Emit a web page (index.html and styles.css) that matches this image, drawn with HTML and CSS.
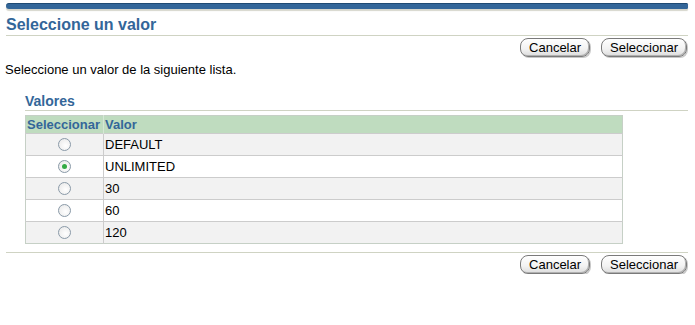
FILE: index.html
```html
<!DOCTYPE html>
<html>
<head>
<meta charset="utf-8">
<link rel="stylesheet" href="styles.css">
</head>
<body>
<div class="page">
  <div class="topbar"></div>
  <h1 class="title">Seleccione un valor</h1>
  <div class="btnrow top">
    <button class="btn">Cancelar</button>
    <button class="btn">Seleccionar</button>
  </div>
  <p class="instr">Seleccione un valor de la siguiente lista.</p>
  <div class="section">
    <h2 class="subtitle">Valores</h2>
    <table class="grid">
      <thead>
        <tr><th class="c1">Seleccionar</th><th class="c2">Valor</th></tr>
      </thead>
      <tbody>
        <tr class="odd"><td class="c1"><span class="radio"></span></td><td class="c2">DEFAULT</td></tr>
        <tr class="even"><td class="c1"><span class="radio on"></span></td><td class="c2">UNLIMITED</td></tr>
        <tr class="odd"><td class="c1"><span class="radio"></span></td><td class="c2">30</td></tr>
        <tr class="even"><td class="c1"><span class="radio"></span></td><td class="c2">60</td></tr>
        <tr class="odd"><td class="c1"><span class="radio"></span></td><td class="c2">120</td></tr>
      </tbody>
    </table>
  </div>
  <div class="btnrow bottom">
    <button class="btn">Cancelar</button>
    <button class="btn">Seleccionar</button>
  </div>
</div>
</body>
</html>
```
FILE: styles.css
```css
html, body {
  margin: 0;
  padding: 0;
  background: #ffffff;
}
body {
  font-family: "Liberation Sans", Arial, sans-serif;
  font-size: 13px;
  color: #000000;
}
.page {
  padding: 3px 7px 0 5px;
}
.topbar {
  margin-left: 1px;
  height: 6px;
  background: #336699;
  border-top: 1px solid #1f4a73;
  border-radius: 4px 2px 2px 4px;
  box-shadow: 0 2px 1px #d6d6cc;
  box-sizing: border-box;
}
.title {
  margin: 6px 0 0 1px;
  font-size: 16px;
  font-weight: bold;
  line-height: 19px;
  height: 19px;
  color: #336699;
  border-bottom: 1px solid #cfd3c3;
  padding-bottom: 1px;
}
.btnrow {
  display: flex;
  justify-content: flex-end;
  gap: 11px;
  padding-right: 1px;
}
.btnrow.top {
  margin-top: 2px;
}
.btn {
  font-family: "Liberation Sans", Arial, sans-serif;
  font-size: 13px;
  height: 19px;
  line-height: 15px;
  padding: 0 8px;
  margin: 0;
  color: #000;
  background: linear-gradient(#ffffff, #f2f2f2 60%, #dcdcdc);
  border: 1px solid #7a7a7a;
  border-radius: 8px;
  box-shadow: inset -1px -1px 0 #b0b0b0, 1px 1px 0 #c8c8c8;
}
.instr {
  margin: 5px 0 0 0;
  line-height: 15px;
}
.section {
  margin-left: 20px;
  margin-top: 16px;
}
.subtitle {
  margin: 0;
  font-size: 14px;
  font-weight: bold;
  line-height: 16px;
  color: #336699;
  border-bottom: 1px solid #cfd3c3;
  padding-bottom: 1px;
}
.grid {
  margin-top: 4px;
  width: 598px;
  border-collapse: collapse;
  border: 1px solid #c6d0c6;
}
.grid th {
  background: #bfdcbf;
  color: #336699;
  font-size: 13px;
  font-weight: bold;
  text-align: left;
  height: 17px;
  padding: 0 0 0 1px;
  line-height: 17px;
  white-space: nowrap;
}
.grid th.c1 {
  border-right: 1px solid #d6e6d6;
}
.grid td {
  height: 21px;
  padding: 0 0 0 1px;
  border-top: 1px solid #cccccc;
  line-height: 21px;
}
.grid .c1 {
  width: 76px;
  border-right: 1px solid #cccccc;
}
.grid td.c1 {
  padding: 0;
  text-align: center;
}
.grid .odd td {
  background: #f2f2f2;
}
.grid .even td {
  background: #ffffff;
}
.radio {
  display: inline-block;
  width: 11px;
  height: 11px;
  border: 1px solid #8a9aa8;
  border-radius: 50%;
  background: radial-gradient(circle at 60% 60%, #ffffff, #e6e6e6);
  vertical-align: middle;
  position: relative;
  top: -1px;
}
.radio.on::after {
  content: "";
  position: absolute;
  left: 3px;
  top: 3px;
  width: 5px;
  height: 5px;
  border-radius: 50%;
  background: #33aa44;
}
.btnrow.bottom {
  margin-top: 8px;
  border-top: 1px solid #cfd3c3;
  padding-top: 2px;
  margin-left: 1px;
}
```
